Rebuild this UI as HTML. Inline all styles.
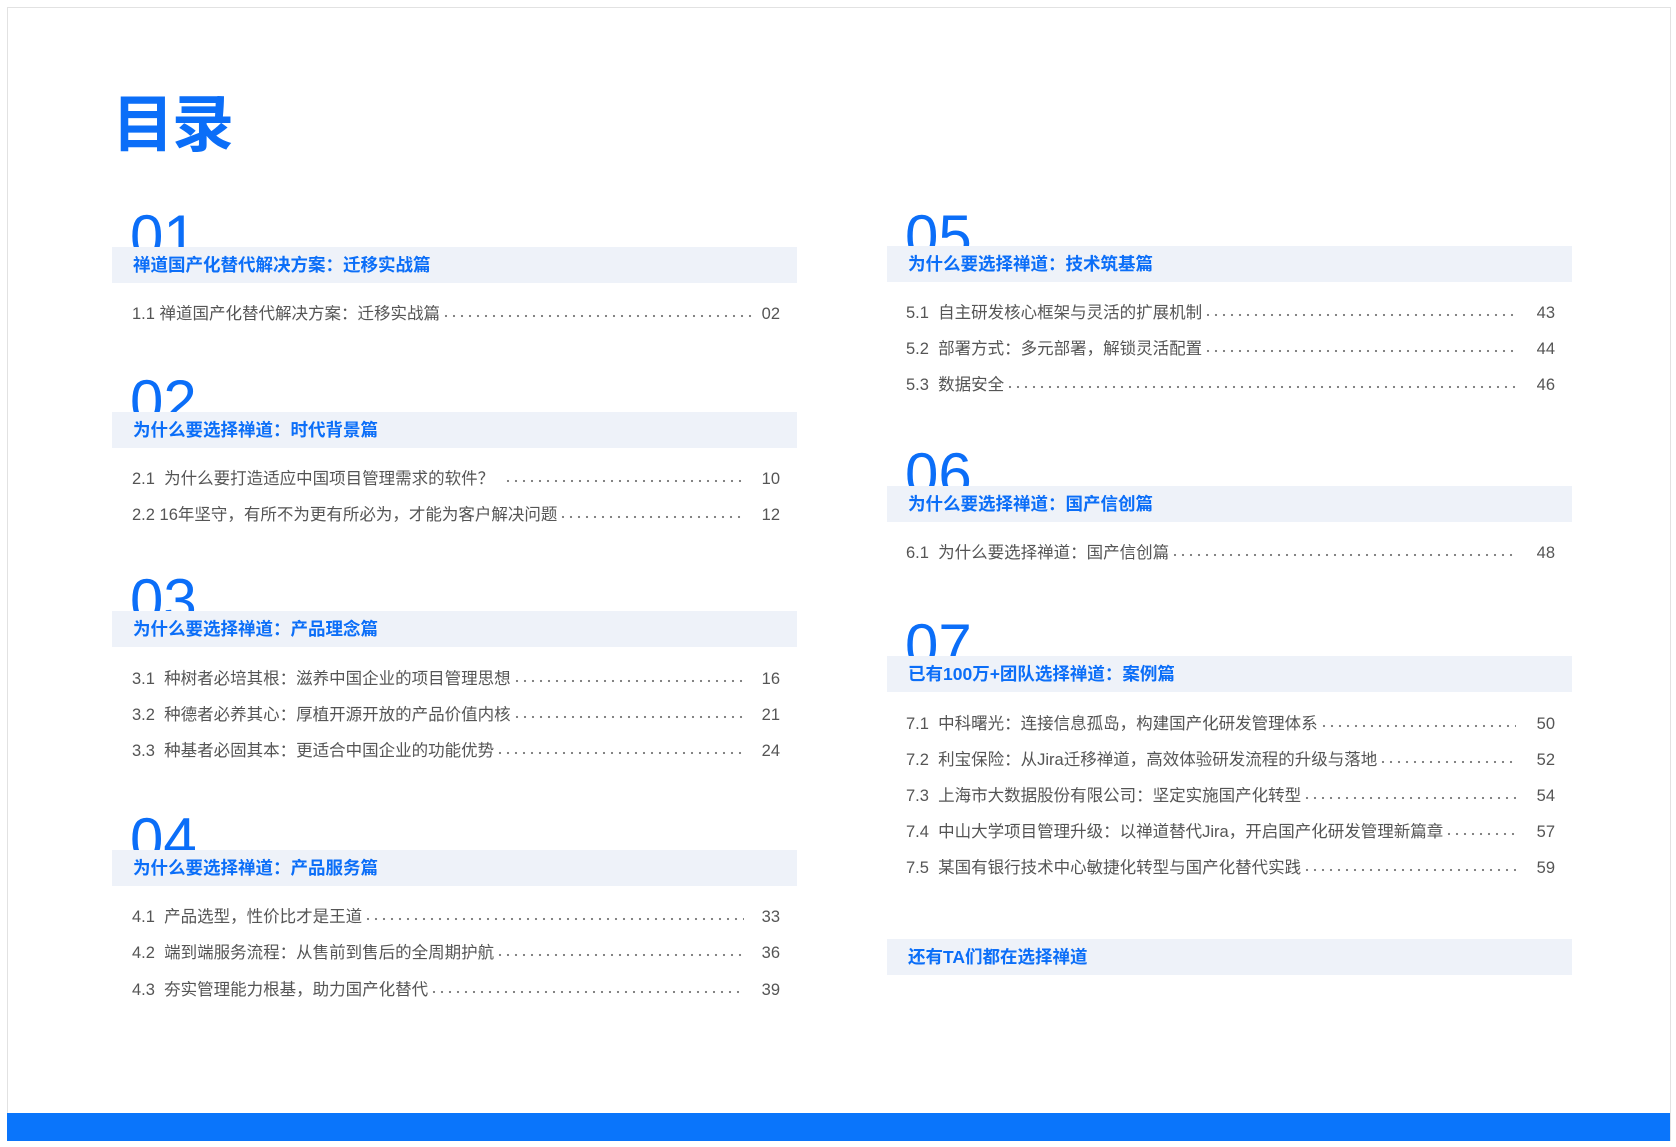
<!DOCTYPE html>
<html><head><meta charset="utf-8"><style>
*{margin:0;padding:0;box-sizing:border-box}
body{width:1676px;height:1147px;background:#fff;position:relative;overflow:hidden;font-family:"Liberation Sans","Noto Sans CJK SC",sans-serif}
.frame{position:absolute;left:7px;top:7px;width:1664px;height:1134px;border:1px solid #e2e2e2;border-bottom:none}
.bar{position:absolute;left:7px;top:1113px;width:1663px;height:28px;background:#0a75fb}
.title{position:absolute;left:112px;top:91px;font-size:62px;font-weight:bold;color:#0b6ef8;line-height:70px;letter-spacing:-2px}
.num{position:absolute;font-size:60px;line-height:60px;color:#0b6ef8;font-family:"Liberation Sans",sans-serif}
.band{position:absolute;height:36px;background:#eef2f9;color:#0b6ef8;font-weight:bold;font-size:17.5px;line-height:37px;padding-left:21px}
.row{position:absolute;display:flex;align-items:center;font-size:16.5px;color:#555;height:24px;line-height:24px}
.row .t{white-space:nowrap}
.row .d{flex:1;height:24px;margin:0 2px;background-image:radial-gradient(circle,#777 0.9px,transparent 1.3px);background-size:8px 6px;background-repeat:repeat-x;background-position:0 11px}
.row .p{white-space:nowrap;text-align:right}
.L{left:132px;width:648px}
.L .p{width:34px}
.R{left:906px;width:649px}
.R .p{width:37px}
</style></head><body>
<div class="frame"></div>
<div class="title">目录</div>

<div class="num" style="left:130px;top:207px">01</div>
<div class="band" style="left:112px;top:247px;width:685px">禅道国产化替代解决方案：迁移实战篇</div>
<div class="row L" style="top:302px"><span class="t">1.1 禅道国产化替代解决方案：迁移实战篇</span><span class="d" style="margin-right:0"></span><span class="p" style="width:26px">02</span></div>

<div class="num" style="left:130px;top:372px">02</div>
<div class="band" style="left:112px;top:412px;width:685px">为什么要选择禅道：时代背景篇</div>
<div class="row L" style="top:467px"><span class="t">2.1&nbsp; 为什么要打造适应中国项目管理需求的软件？</span><span class="d" style="margin-left:10px"></span><span class="p">10</span></div>
<div class="row L" style="top:503px"><span class="t">2.2 16年坚守，有所不为更有所必为，才能为客户解决问题</span><span class="d"></span><span class="p">12</span></div>

<div class="num" style="left:130px;top:571px">03</div>
<div class="band" style="left:112px;top:611px;width:685px">为什么要选择禅道：产品理念篇</div>
<div class="row L" style="top:667px"><span class="t">3.1&nbsp; 种树者必培其根：滋养中国企业的项目管理思想</span><span class="d"></span><span class="p">16</span></div>
<div class="row L" style="top:703px"><span class="t">3.2&nbsp; 种德者必养其心：厚植开源开放的产品价值内核</span><span class="d"></span><span class="p">21</span></div>
<div class="row L" style="top:739px"><span class="t">3.3&nbsp; 种基者必固其本：更适合中国企业的功能优势</span><span class="d"></span><span class="p">24</span></div>

<div class="num" style="left:130px;top:810px">04</div>
<div class="band" style="left:112px;top:850px;width:685px">为什么要选择禅道：产品服务篇</div>
<div class="row L" style="top:905px"><span class="t">4.1&nbsp; 产品选型，性价比才是王道</span><span class="d"></span><span class="p">33</span></div>
<div class="row L" style="top:941px"><span class="t">4.2&nbsp; 端到端服务流程：从售前到售后的全周期护航</span><span class="d"></span><span class="p">36</span></div>
<div class="row L" style="top:978px"><span class="t">4.3&nbsp; 夯实管理能力根基，助力国产化替代</span><span class="d"></span><span class="p">39</span></div>

<div class="num" style="left:905px;top:207px">05</div>
<div class="band" style="left:887px;top:246px;width:685px">为什么要选择禅道：技术筑基篇</div>
<div class="row R" style="top:301px"><span class="t">5.1&nbsp; 自主研发核心框架与灵活的扩展机制</span><span class="d"></span><span class="p">43</span></div>
<div class="row R" style="top:337px"><span class="t">5.2&nbsp; 部署方式：多元部署，解锁灵活配置</span><span class="d"></span><span class="p">44</span></div>
<div class="row R" style="top:373px"><span class="t">5.3&nbsp; 数据安全</span><span class="d"></span><span class="p">46</span></div>

<div class="num" style="left:905px;top:445px">06</div>
<div class="band" style="left:887px;top:486px;width:685px">为什么要选择禅道：国产信创篇</div>
<div class="row R" style="top:541px"><span class="t">6.1&nbsp; 为什么要选择禅道：国产信创篇</span><span class="d"></span><span class="p">48</span></div>

<div class="num" style="left:905px;top:616px">07</div>
<div class="band" style="left:887px;top:656px;width:685px">已有100万+团队选择禅道：案例篇</div>
<div class="row R" style="top:712px"><span class="t">7.1&nbsp; 中科曙光：连接信息孤岛，构建国产化研发管理体系</span><span class="d"></span><span class="p">50</span></div>
<div class="row R" style="top:748px"><span class="t">7.2&nbsp; 利宝保险：从Jira迁移禅道，高效体验研发流程的升级与落地</span><span class="d"></span><span class="p">52</span></div>
<div class="row R" style="top:784px"><span class="t">7.3&nbsp; 上海市大数据股份有限公司：坚定实施国产化转型</span><span class="d"></span><span class="p">54</span></div>
<div class="row R" style="top:820px"><span class="t">7.4&nbsp; 中山大学项目管理升级：以禅道替代Jira，开启国产化研发管理新篇章</span><span class="d"></span><span class="p">57</span></div>
<div class="row R" style="top:856px"><span class="t">7.5&nbsp; 某国有银行技术中心敏捷化转型与国产化替代实践</span><span class="d"></span><span class="p">59</span></div>

<div class="band" style="left:887px;top:939px;width:685px">还有TA们都在选择禅道</div>

<div class="bar"></div>
</body></html>
